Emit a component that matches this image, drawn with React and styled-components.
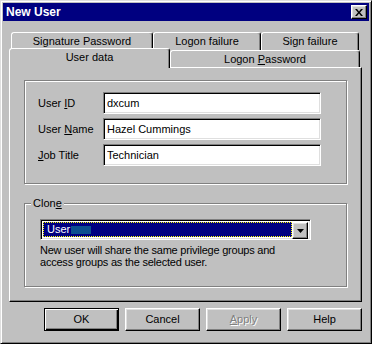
import React from 'react';
import styled, { createGlobalStyle } from 'styled-components';

const GlobalStyle = createGlobalStyle`
  html, body {
    margin: 0;
    padding: 0;
    background: #c0c0c0;
  }
  body {
    font-family: "Liberation Sans", Arial, sans-serif;
    font-size: 11px;
    color: #000;
  }
`;

const Window = styled.div`
  box-sizing: border-box;
  width: 372px;
  height: 344px;
  background: #c0c0c0;
  border: 1px solid;
  border-color: #dfdfdf #000 #000 #dfdfdf;
  box-shadow: inset 1px 1px 0 #fff, inset -1px -1px 0 #808080;
  padding: 2px;
  display: flex;
  flex-direction: column;
`;

const TitleBar = styled.div`
  height: 18px;
  background: #000080;
  color: #fff;
  font-weight: bold;
  font-size: 12px;
  display: flex;
  align-items: center;
  justify-content: space-between;
  padding: 0 2px 0 3px;
`;

const Raised = `
  box-sizing: border-box;
  background: #c0c0c0;
  border: 1px solid;
  border-color: #fff #000 #000 #fff;
  box-shadow: inset -1px -1px 0 #808080, inset 1px 1px 0 #dfdfdf;
`;

const CloseButton = styled.div`
  ${Raised}
  width: 16px;
  height: 14px;
  display: flex;
  align-items: center;
  justify-content: center;
`;

const Body = styled.div`
  display: flex;
  flex-direction: column;
  padding: 11px 7px 0 6px;
`;

const TabRow = styled.div`
  position: relative;
  display: flex;
  align-items: flex-start;
  height: ${p => p.$h}px;
  padding-left: ${p => p.$indent || 0}px;
  margin-top: ${p => p.$mt || 0}px;
  z-index: ${p => p.$z};
`;

const Tab = styled.div`
  box-sizing: border-box;
  width: ${p => p.$w}px;
  height: ${p => (p.$selected ? 20 : p.$h || 17)}px;
  margin-top: ${p => (p.$selected ? 0 : p.$offset || 0)}px;
  border: 1px solid;
  border-bottom: none;
  border-color: #fff #000 transparent #fff;
  border-radius: 3px 3px 0 0;
  box-shadow: inset -1px 0 0 #808080;
  background: #c0c0c0;
  display: flex;
  justify-content: center;
  padding-top: 2px;
  line-height: 13px;
  white-space: nowrap;
`;

const Panel = styled.div`
  position: relative;
  z-index: 1;
  box-sizing: border-box;
  width: 353px;
  height: 235px;
  margin-top: -1px;
  border: 1px solid;
  border-color: #fff #000 #000 #fff;
  box-shadow: inset -1px -1px 0 #808080;
  padding: 12px 0 0 14px;
  display: flex;
  flex-direction: column;
`;

const GroupBox = styled.div`
  position: relative;
  box-sizing: border-box;
  width: 323px;
  height: ${p => p.$h}px;
  margin-top: ${p => p.$mt || 0}px;
  border: 1px solid #808080;
  box-shadow: inset 1px 1px 0 #fff, 1px 1px 0 #fff;
  padding: ${p => p.$pad};
`;

const Legend = styled.span`
  position: absolute;
  top: -7px;
  left: 6px;
  padding: 0 2px;
  line-height: 13px;
  background: #c0c0c0;
`;

const FieldGrid = styled.div`
  display: grid;
  grid-template-columns: 65px 218px;
  grid-auto-rows: 22px;
  row-gap: 4px;
  align-items: center;
`;

const Label = styled.label`
  line-height: 13px;
  white-space: nowrap;
`;

const Sunken = `
  box-sizing: border-box;
  border: 1px solid;
  border-color: #808080 #fff #fff #808080;
  box-shadow: inset 1px 1px 0 #000, inset -1px -1px 0 #dfdfdf;
`;

const TextField = styled.input`
  ${Sunken}
  width: 218px;
  height: 22px;
  margin: 0;
  padding: 0 0 0 3px;
  background: #fff;
  font-family: "Liberation Sans", Arial, sans-serif;
  font-size: 11px;
  color: #000;
  outline: none;
`;

const Combo = styled.div`
  ${Sunken}
  width: 271px;
  height: 21px;
  padding: 2px;
  background: #fff;
  display: flex;
`;

const ComboValue = styled.div`
  box-sizing: border-box;
  flex: 1;
  background: #000080;
  border: 1px dotted #ffff00;
  color: #fff;
  padding-left: 3px;
  display: flex;
  align-items: center;
  line-height: 13px;
`;

const Caret = styled.span`
  display: inline-block;
  width: 20px;
  height: 8px;
  margin-left: 1px;
  background: #0b4f8f;
`;

const ComboButton = styled.div`
  ${Raised}
  width: 16px;
  height: 17px;
  display: flex;
  align-items: center;
  justify-content: center;
`;

const Note = styled.p`
  margin: 4px 0 0;
  line-height: 12px;
  letter-spacing: -0.22px;
`;

const ButtonRow = styled.div`
  display: flex;
  justify-content: flex-end;
  gap: 6px;
  margin-top: 6px;
  width: 353px;
`;

const Button = styled.div`
  box-sizing: border-box;
  width: 75px;
  height: 23px;
  background: #c0c0c0;
  border: 1px solid;
  border-color: ${p => (p.$default ? '#000' : '#fff #000 #000 #fff')};
  box-shadow: ${p =>
    p.$default
      ? 'inset 1px 1px 0 #fff, inset -1px -1px 0 #000, inset -2px -2px 0 #808080'
      : 'inset -1px -1px 0 #808080, inset 1px 1px 0 #dfdfdf'};
  display: flex;
  align-items: center;
  justify-content: center;
  color: ${p => (p.$disabled ? '#808080' : '#000')};
  text-shadow: ${p => (p.$disabled ? '1px 1px 0 #fff' : 'none')};
  line-height: 13px;
`;

export default function App() {
  return (
    <>
      <GlobalStyle />
      <Window>
        <TitleBar>
          <span>New User</span>
          <CloseButton>
            <svg width="8" height="7" viewBox="0 0 8 7">
              <path d="M0 0h2l2 2.5L6 0h2L5 3.5 8 7H6L4 4.5 2 7H0l3-3.5z" fill="#000" />
            </svg>
          </CloseButton>
        </TitleBar>
        <Body>
          <TabRow $h={18} $indent={2} $z={0}>
            <Tab $w={142} $h={18}>Signature Password</Tab>
            <Tab $w={108} $h={18}>Logon failure</Tab>
            <Tab $w={98} $h={18}>Sign failure</Tab>
          </TabRow>
          <TabRow $h={20} $mt={-2} $z={2}>
            <Tab $w={161} $selected>User data</Tab>
            <Tab $w={190} $offset={2}>
              <span>Logon <u>P</u>assword</span>
            </Tab>
          </TabRow>
          <Panel>
            <GroupBox $h={104} $pad="11px 0 0 13px">
              <FieldGrid>
                <Label>User <u>I</u>D</Label>
                <TextField readOnly defaultValue="dxcum" />
                <Label>User <u>N</u>ame</Label>
                <TextField readOnly defaultValue="Hazel Cummings" />
                <Label><u>J</u>ob Title</Label>
                <TextField readOnly defaultValue="Technician" />
              </FieldGrid>
            </GroupBox>
            <GroupBox $h={84} $mt={19} $pad="15px 0 0 15px">
              <Legend>Clon<u>e</u></Legend>
              <Combo>
                <ComboValue>
                  User<Caret />
                </ComboValue>
                <ComboButton>
                  <svg width="7" height="4" viewBox="0 0 7 4">
                    <path d="M0 0h7L3.5 4z" fill="#000" />
                  </svg>
                </ComboButton>
              </Combo>
              <Note>
                New user will share the same privilege groups and
                <br />
                access groups as the selected user.
              </Note>
            </GroupBox>
          </Panel>
          <ButtonRow>
            <Button $default>OK</Button>
            <Button>Cancel</Button>
            <Button $disabled><span><u>A</u>pply</span></Button>
            <Button>Help</Button>
          </ButtonRow>
        </Body>
      </Window>
    </>
  );
}
